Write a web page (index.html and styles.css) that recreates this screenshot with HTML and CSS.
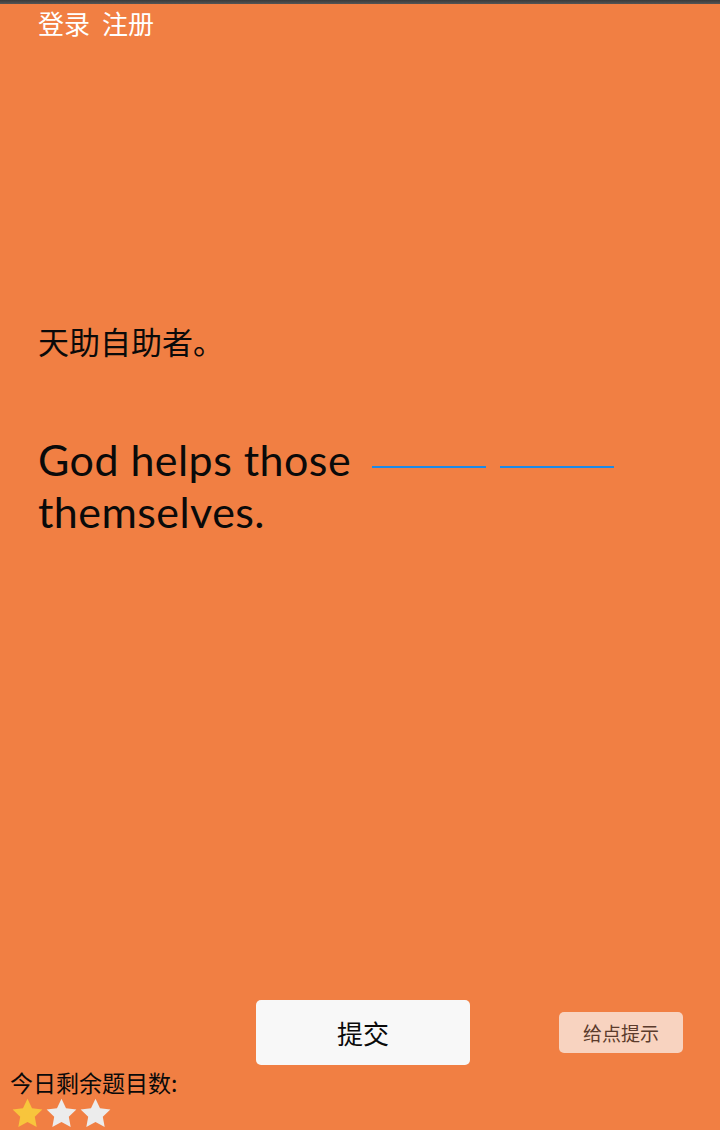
FILE: index.html
```html
<!DOCTYPE html>
<html lang="zh">
<head>
<meta charset="utf-8">
<link rel="stylesheet" href="styles.css">
</head>
<body>
<div class="page">
  <div class="topstrip"></div>
  <nav class="nav">
    <a class="nav-link">登录</a>
    <a class="nav-link">注册</a>
  </nav>
  <main class="content">
    <p class="cn">天助自助者。</p>
    <p class="en">God helps those <span class="blank"></span><span class="blank"></span> themselves.</p>
  </main>
  <div class="actions">
    <button class="submit">提交</button>
    <button class="hint">给点提示</button>
  </div>
  <div class="remain">
    <div class="remain-label">今日剩余题目数:</div>
    <div class="stars">
      <svg class="star gold" viewBox="0 0 24 24"><path d="M12 1.8l3.1 6.6 7.1.9-5.2 4.9 1.3 7.1L12 17.8l-6.3 3.5 1.3-7.1-5.2-4.9 7.1-.9z"/></svg>
      <svg class="star grey" viewBox="0 0 24 24"><path d="M12 1.8l3.1 6.6 7.1.9-5.2 4.9 1.3 7.1L12 17.8l-6.3 3.5 1.3-7.1-5.2-4.9 7.1-.9z"/></svg>
      <svg class="star grey" viewBox="0 0 24 24"><path d="M12 1.8l3.1 6.6 7.1.9-5.2 4.9 1.3 7.1L12 17.8l-6.3 3.5 1.3-7.1-5.2-4.9 7.1-.9z"/></svg>
    </div>
  </div>
</div>
</body>
</html>
```

FILE: styles.css
```css
html, body {
  margin: 0;
  padding: 0;
}
body {
  background: #f17f43;
  font-family: "Open Sans", "Noto Sans CJK SC", sans-serif;
  color: #0a0a0a;
}
.page {
  height: 1130px;
  display: flex;
  flex-direction: column;
  overflow: hidden;
}
.topstrip {
  height: 4px;
  background: linear-gradient(#3a3a3a, #555);
  flex: none;
}
.nav {
  display: flex;
  gap: 12px;
  padding: 3px 0 0 38px;
  height: 33px;
}
.nav-link {
  color: #fff;
  font-family: "Noto Sans CJK SC", sans-serif;
  font-size: 26px;
  line-height: 32px;
}
.content {
  padding: 0 40px 0 38px;
}
.cn {
  margin: 281px 0 0 0;
  font-family: "Noto Sans CJK SC", sans-serif;
  font-size: 31px;
  line-height: 40px;
}
.en {
  margin: 73px 0 0 0;
  font-family: Lato, "Open Sans", sans-serif;
  font-size: 43px;
  line-height: 52px;
  letter-spacing: 0.45px;
}
.blank {
  display: inline-block;
  width: 114px;
  height: 2px;
  background: #1b8ae8;
  margin-left: 9px;
  vertical-align: 8px;
}
.blank + .blank {
  margin-left: 14px;
}
.actions {
  margin-top: auto;
  display: flex;
  align-items: center;
  padding-left: 256px;
}
.submit {
  width: 214px;
  height: 65px;
  background: #f8f8f8;
  border: none;
  border-radius: 5px;
  font-family: "Noto Sans CJK SC", sans-serif;
  font-size: 26px;
  color: #0a0a0a;
}
.hint {
  margin-left: 89px;
  width: 124px;
  height: 41px;
  background: #f8d3c0;
  border: none;
  border-radius: 5px;
  font-family: "Noto Sans CJK SC", sans-serif;
  font-size: 19px;
  color: #5b3b2c;
}
.remain {
  padding-left: 10px;
  margin-top: 3px;
}
.remain-label {
  font-family: "Noto Sans CJK SC", sans-serif;
  font-size: 23px;
  line-height: 28px;
  color: #0a0a0a;
}
.stars {
  display: flex;
  height: 34px;
}
.star {
  width: 35px;
  height: 35px;
  margin-right: -1px;
}
.star.gold { fill: #f8c53c; }
.star.grey { fill: #ececec; }
```
